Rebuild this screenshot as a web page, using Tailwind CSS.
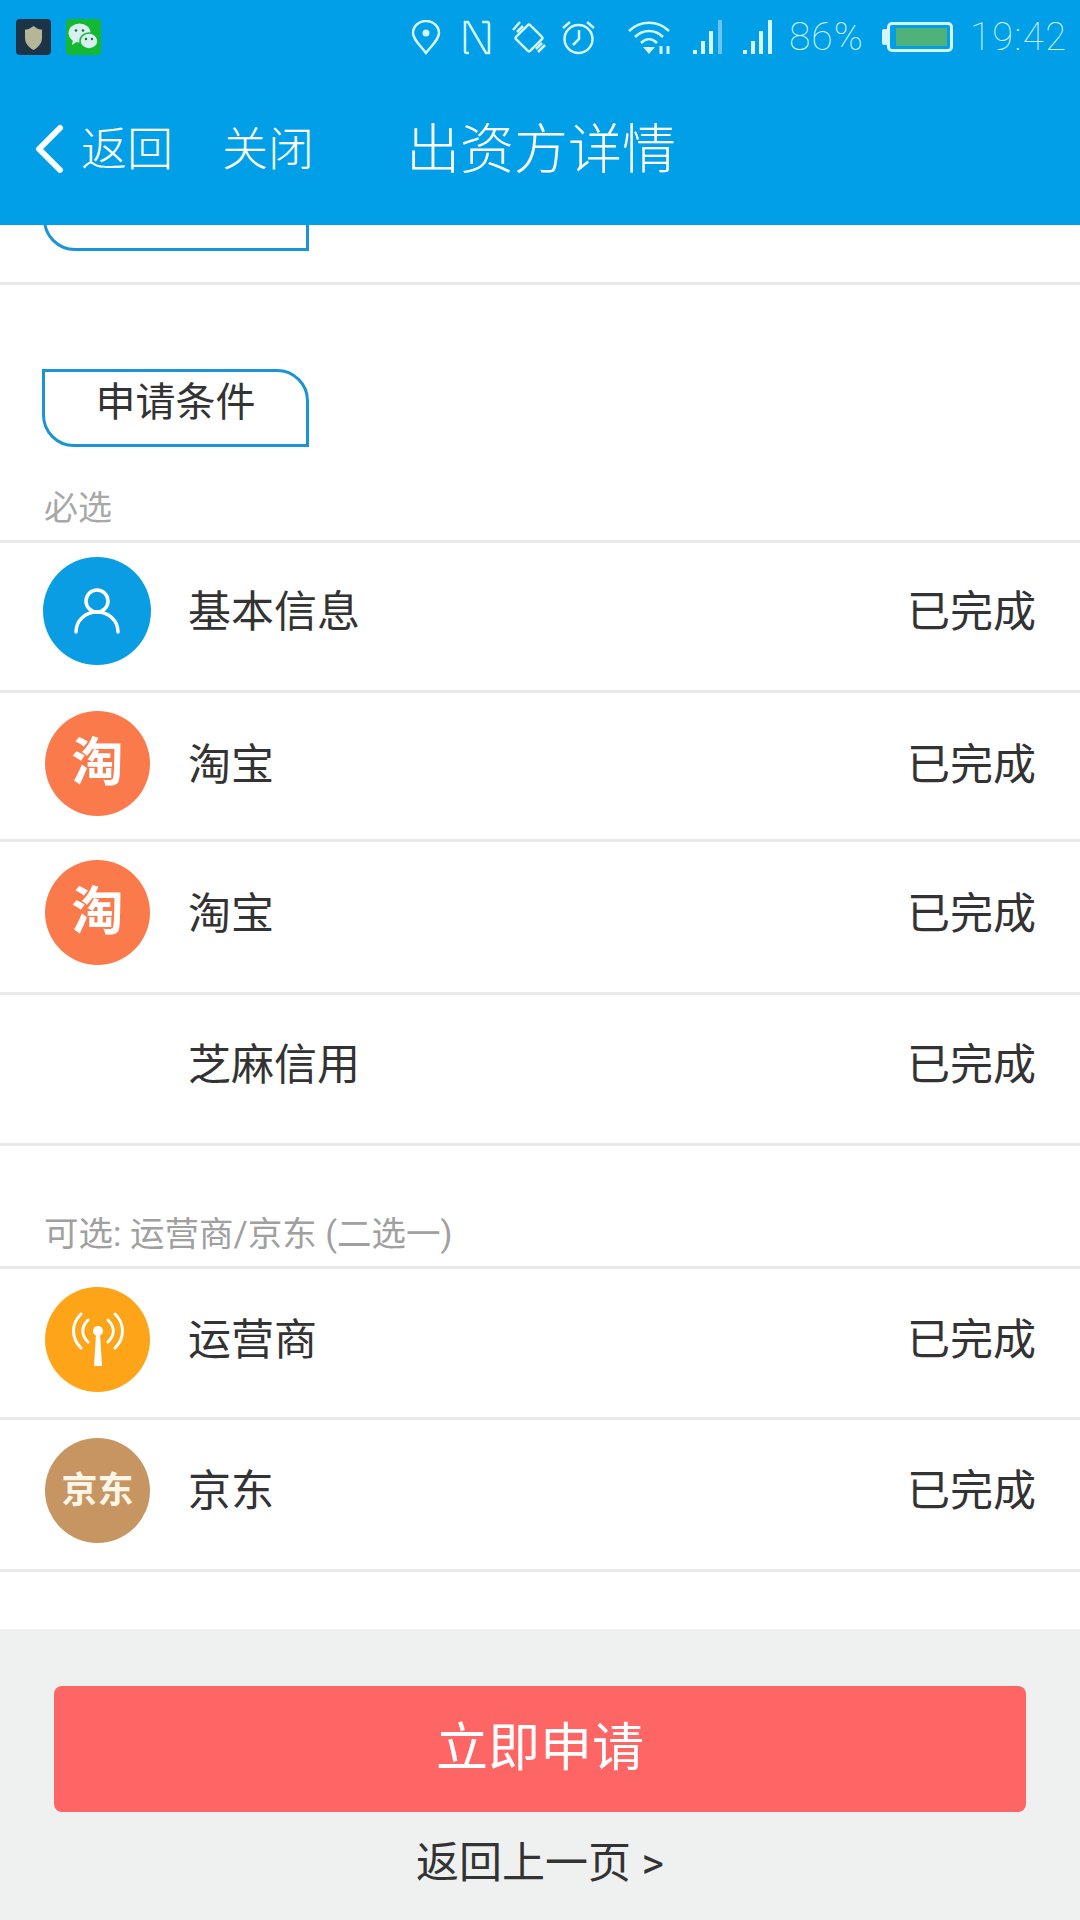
<!DOCTYPE html>
<html lang="zh-CN">
<head>
  <meta charset="UTF-8" />
  <meta name="viewport" content="width=device-width, initial-scale=1.0"/>
  <title>出资方详情</title>
  <script src="https://cdn.jsdelivr.net/npm/@tailwindcss/browser@4"></script>
</head>
<body class="w-[1080px] h-[1920px] overflow-hidden bg-white flex flex-col text-[#333] font-['Roboto','Noto_Sans_CJK_SC',sans-serif]">

  <!-- status bar + nav -->
  <header class="relative z-10 h-[225px] shrink-0 bg-[#009fe8] text-white">
    <div class="h-[74px] flex items-center pl-[16px]">
      <svg class="w-[35px] h-[36px] shrink-0" viewBox="0 0 35 36"><rect width="35" height="36" rx="4" fill="#1d3447"/><path d="M17.500 7 C21 10 24 10.500 26 10.500 V19 C26 25 21 29 17.500 31 C14 29 9 25 9 19 V10.500 C11 10.500 14 10 17.500 7Z" fill="#b5b697"/></svg>
      <svg class="w-[35px] h-[36px] ml-[15px] shrink-0" viewBox="0 0 35 36"><rect width="35" height="36" rx="4" fill="#14b832"/><ellipse cx="13.500" cy="14" rx="11" ry="9.500" fill="#d8f0f0"/><path d="M7 20 L6 26 L12 22Z" fill="#d8f0f0"/><ellipse cx="23" cy="22" rx="9" ry="8" fill="#d8f0f0" stroke="#14b832" stroke-width="1.500"/><circle cx="10" cy="11.500" r="1.300" fill="#1c6b45"/><circle cx="17" cy="11.500" r="1.300" fill="#1c6b45"/><circle cx="20" cy="20" r="1.200" fill="#1c6b45"/><circle cx="26" cy="20" r="1.200" fill="#1c6b45"/></svg>

      <svg class="w-[30px] h-[35px] ml-[310px] shrink-0" viewBox="0 0 30 35" fill="none" stroke="#d4f6ff" stroke-width="2.500"><path d="M15 33 C8 24 2 19 2 13 A13 12 0 0 1 28 13 C28 19 22 24 15 33Z"/><circle cx="15" cy="13" r="3.500" fill="#d4f6ff" stroke="none"/></svg>
      <svg class="w-[28px] h-[35px] ml-[22px] shrink-0" viewBox="0 0 28 35" fill="none" stroke="#d4f6ff" stroke-width="2.500"><path d="M6 33 H4 Q2 33 2 31 V2 H5 L23 33 H26 V4 Q26 2 24 2 H19"/></svg>
      <svg class="w-[37px] h-[37px] ml-[20px] shrink-0" viewBox="0 0 37 37" fill="none" stroke="#d4f6ff" stroke-width="2.500"><rect x="8" y="9" width="20" height="20" rx="2" transform="rotate(45 18 19)"/><path d="M2 11 L9 3 M6 13 L12 7 M27 33 L34 26 M25 30 L31 24"/></svg>
      <svg class="w-[35px] h-[36px] ml-[13px] shrink-0" viewBox="0 0 35 36" fill="none" stroke="#d4f6ff" stroke-width="2.500"><circle cx="17.500" cy="20" r="14"/><path d="M18 11 V20 L12 26"/><path d="M2 9 L9 3 M33 9 L26 3"/></svg>
      <svg class="w-[44px] h-[36px] ml-[32px] shrink-0" viewBox="0 0 44 36" fill="none" stroke="#d4f6ff" stroke-width="2.500"><path d="M1 12 C12 1 30 1 41 12"/><path d="M7 18 C15 10 27 10 35 18"/><path d="M13 24 C18 19 24 19 29 24"/><path d="M15 28 H27 L21 35Z" fill="#d4f6ff" stroke="none"/><path d="M33 27 V35 M40 27 V35" stroke-width="3"/></svg>
      <svg class="w-[29px] h-[36px] ml-[21px] shrink-0" viewBox="0 0 29 36"><rect x="0" y="31" width="4" height="4" fill="#d4f6ff"/><rect x="8" y="22" width="4" height="13" fill="#d4f6ff"/><rect x="16" y="12" width="4" height="23" fill="#d4f6ff"/><rect x="25" y="1" width="4" height="34" fill="#6cc4f4"/></svg>
      <svg class="w-[29px] h-[36px] ml-[21px] shrink-0" viewBox="0 0 29 36"><rect x="0" y="31" width="4" height="4" fill="#d4f6ff"/><rect x="8" y="22" width="4" height="13" fill="#d4f6ff"/><rect x="16" y="12" width="4" height="23" fill="#d4f6ff"/><rect x="25" y="1" width="4" height="34" fill="#d4f6ff"/></svg>
      <span class="ml-[17px] w-[80px] text-[39px] leading-none font-thin tracking-[1px] text-[#d4f6ff] shrink-0">86%</span>
      <div class="ml-[13px] flex items-center shrink-0">
        <div class="w-[5px] h-[16px] bg-[#d4f6ff] rounded-l-[2px]"></div>
        <div class="w-[66px] h-[30px] border-[3px] border-[#d4f6ff] rounded-[5px] p-[3px] pl-[6px]">
          <div class="h-full bg-[#4fb27a]"></div>
        </div>
      </div>
      <span class="ml-[17px] text-[38px] leading-none font-thin tracking-[1.500px] text-[#d4f6ff] shrink-0">19:42</span>
    </div>
    <nav class="h-[148px] flex items-center pt-[2px] pl-[35px] text-[46px] font-light">
      <svg class="w-[29px] h-[50px] shrink-0" viewBox="0 0 29 50" fill="none" stroke="#fff" stroke-width="6" stroke-linecap="round" stroke-linejoin="round"><path d="M25 4 L4 25 L25 46"/></svg>
      <span class="ml-[17px] w-[92px]">返回</span>
      <span class="ml-[49px] w-[92px]">关闭</span>
      <h1 class="ml-[92px] mt-[3px] text-[54px] font-light">出资方详情</h1>
    </nav>
  </header>

  <main class="flex-1 overflow-hidden">
    <!-- previous section, scrolled under the header -->
    <div class="-mt-[52px] ml-[43px] w-[266px] h-[78px] border-[3px] border-[#1a94d4] rounded-tr-[32px] rounded-bl-[32px] flex justify-center">
      <span class="text-[40px] leading-[64px]">基本信息</span>
    </div>
    <div class="mt-[31px] h-[3px] bg-[#e9e9e9]"></div>

    <div class="mt-[84px] ml-[42px] w-[267px] h-[78px] border-[3px] border-[#1a94d4] rounded-tr-[32px] rounded-bl-[32px] flex justify-center">
      <span class="text-[40px] leading-[62px]">申请条件</span>
    </div>
    <p class="mt-[39px] ml-[44px] text-[34px] leading-[44px] text-[#a8a8a8]">必选</p>
    <div class="mt-[10px] h-[3px] bg-[#e9e9e9]"></div>

    <section>
      <div class="h-[150px] flex items-start border-b-[3px] border-[#e9e9e9]">
        <div class="mt-[14px] ml-[43px] w-[108px] h-[108px] rounded-full bg-[#0a9de4] flex items-center justify-center shrink-0">
          <svg class="w-[46px] h-[46px]" viewBox="0 0 46 46" fill="none" stroke="#fff" stroke-width="3.500" stroke-linecap="round"><circle cx="23" cy="13" r="11"/><path d="M2 44 C2 32 12 24 23 24 C34 24 44 32 44 44"/></svg>
        </div>
        <span class="mt-[38px] ml-[37px] flex-1 text-[43px] leading-[62px]">基本信息</span>
        <span class="mt-[38px] mr-[44px] text-[43px] leading-[62px]">已完成</span>
      </div>
      <div class="h-[149px] flex items-start border-b-[3px] border-[#e9e9e9]">
        <div class="mt-[18px] ml-[45px] w-[105px] h-[105px] rounded-full bg-[#fb7a4b] flex items-center justify-center text-white text-[52px] font-bold leading-none shrink-0">淘</div>
        <span class="mt-[41px] ml-[38px] flex-1 text-[43px] leading-[62px]">淘宝</span>
        <span class="mt-[41px] mr-[44px] text-[43px] leading-[62px]">已完成</span>
      </div>
      <div class="h-[153px] flex items-start border-b-[3px] border-[#e9e9e9]">
        <div class="mt-[18px] ml-[45px] w-[105px] h-[105px] rounded-full bg-[#fb7a4b] flex items-center justify-center text-white text-[52px] font-bold leading-none shrink-0">淘</div>
        <span class="mt-[41px] ml-[38px] flex-1 text-[43px] leading-[62px]">淘宝</span>
        <span class="mt-[41px] mr-[44px] text-[43px] leading-[62px]">已完成</span>
      </div>
      <div class="h-[151px] flex items-start border-b-[3px] border-[#e9e9e9]">
        <span class="mt-[39px] ml-[188px] flex-1 text-[43px] leading-[62px]">芝麻信用</span>
        <span class="mt-[39px] mr-[44px] text-[43px] leading-[62px]">已完成</span>
      </div>
    </section>

    <p class="mt-[66px] ml-[44px] text-[34.500px] leading-[44px] text-[#a0a0a0]">可选: 运营商/京东 (二选一)</p>
    <div class="mt-[10px] h-[3px] bg-[#e9e9e9]"></div>

    <section>
      <div class="h-[151px] flex items-start border-b-[3px] border-[#e9e9e9]">
        <div class="mt-[18px] ml-[45px] w-[105px] h-[105px] rounded-full bg-[#fea419] flex items-center justify-center shrink-0">
          <svg class="w-[52px] h-[56px]" viewBox="0 0 52 56" fill="none" stroke="#fff" stroke-width="3" stroke-linecap="round"><path d="M9 2 C-1 12 -1 26 9 36 M43 2 C53 12 53 26 43 36 M16 8 C9 15 9 23 16 30 M36 8 C43 15 43 23 36 30"/><circle cx="26" cy="19" r="5" fill="#fff" stroke="none"/><path d="M24 22 H28 L30 54 H22Z" fill="#fff" stroke="none"/></svg>
        </div>
        <span class="mt-[40px] ml-[38px] flex-1 text-[43px] leading-[62px]">运营商</span>
        <span class="mt-[40px] mr-[44px] text-[43px] leading-[62px]">已完成</span>
      </div>
      <div class="h-[152px] flex items-start border-b-[3px] border-[#e9e9e9]">
        <div class="mt-[18px] ml-[45px] w-[105px] h-[105px] rounded-full bg-[#c69561] flex items-center justify-center text-[#fff6e8] text-[36px] font-bold leading-none shrink-0">京东</div>
        <span class="mt-[40px] ml-[38px] flex-1 text-[43px] leading-[62px]">京东</span>
        <span class="mt-[40px] mr-[44px] text-[43px] leading-[62px]">已完成</span>
      </div>
    </section>
  </main>

  <!-- fixed bottom bar -->
  <footer class="h-[291px] shrink-0 bg-[#eff1f1] pt-[57px] px-[54px] flex flex-col items-center">
    <button class="w-[972px] h-[126px] shrink-0 bg-[#fe6565] rounded-[8px] text-white text-[52px]">立即申请</button>
    <a class="mt-[21px] text-[43px] leading-[60px] text-[#333]">返回上一页 &gt;</a>
  </footer>

</body>
</html>
